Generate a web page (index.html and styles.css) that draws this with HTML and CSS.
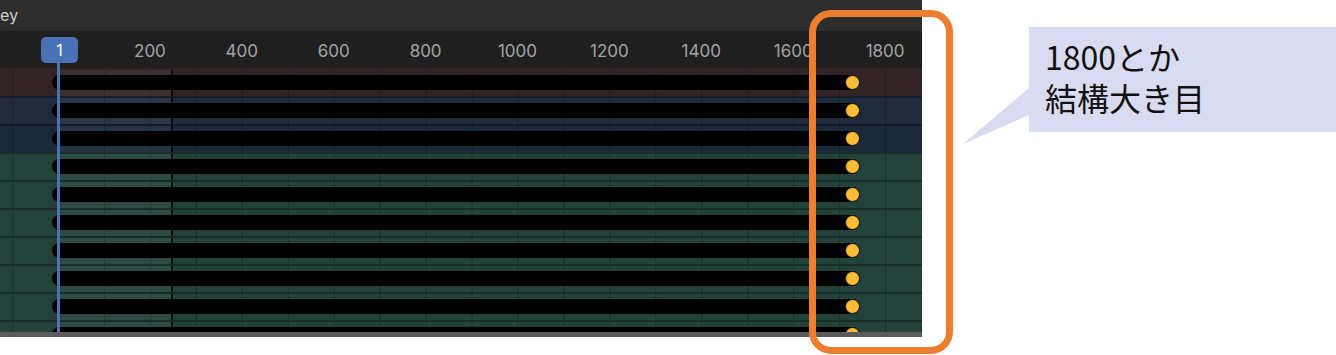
FILE: index.html
```html
<!DOCTYPE html>
<html lang="ja">

<head>
    <meta charset="UTF-8">
    <title>Timeline</title>
    <link rel="stylesheet" href="styles.css">
</head>

<body>

    <div class="page">

        <!-- Panneau de la timeline -->
        <div class="panel">
            <div class="panel-header"><span class="panel-title">Key</span></div>

            <div class="ruler">
                <span class="ruler-label">200</span>
                <span class="ruler-label">400</span>
                <span class="ruler-label">600</span>
                <span class="ruler-label">800</span>
                <span class="ruler-label">1000</span>
                <span class="ruler-label">1200</span>
                <span class="ruler-label">1400</span>
                <span class="ruler-label">1600</span>
                <span class="ruler-label">1800</span>
            </div>

            <div class="tracks">
                <div class="track track-red"><div class="key-bar"><span class="key-dot"></span></div></div>
                <div class="track track-blue"><div class="key-bar"><span class="key-dot"></span></div></div>
                <div class="track track-navy"><div class="key-bar"><span class="key-dot"></span></div></div>
                <div class="track track-green"><div class="key-bar"><span class="key-dot"></span></div></div>
                <div class="track track-green"><div class="key-bar"><span class="key-dot"></span></div></div>
                <div class="track track-green"><div class="key-bar"><span class="key-dot"></span></div></div>
                <div class="track track-green"><div class="key-bar"><span class="key-dot"></span></div></div>
                <div class="track track-green"><div class="key-bar"><span class="key-dot"></span></div></div>
                <div class="track track-green"><div class="key-bar"><span class="key-dot"></span></div></div>
                <div class="track track-green"><div class="key-bar"><span class="key-dot"></span></div></div>
            </div>

            <div class="scrollbar"></div>

            <!-- Tête de lecture -->
            <div class="playhead-line"></div>
            <div class="playhead">1</div>
        </div>

        <!-- Bulle de commentaire -->
        <div class="note">
            <span class="note-tail"></span>
            <p class="note-text">1800とか<br>結構大き目</p>
        </div>

    </div>

    <!-- Cadre orange -->
    <div class="highlight"></div>

</body>

</html>
```

FILE: styles.css
```css
/* Style global */
body, html {
    margin: 0;
    padding: 0;
    background-color: #fff;
    overflow: hidden;
}

.page {
    display: flex;
    align-items: flex-start;
    width: 1336px;
    height: 355px;
}

/* Panneau */
.panel {
    position: relative;
    width: 922px;
    flex: 0 0 auto;
    display: flex;
    flex-direction: column;
    font-family: Inter, "Liberation Sans", sans-serif;
}

.panel-header {
    height: 31px;
    background-color: #2d2d2d;
    display: flex;
    align-items: center;
    overflow: hidden;
}

.panel-title {
    margin-left: -10px;
    margin-top: -2px;
    font-size: 16px;
    color: #cdcdcd;
}

/* Règle */
.ruler {
    height: 37px;
    background-color: #1f1f1f;
    display: flex;
    align-items: center;
    padding-left: 104px;
    padding-top: 2px;
    box-sizing: border-box;
}

.ruler-label {
    flex: 0 0 91.9px;
    text-align: center;
    font-size: 17px;
    color: #a3a3a3;
}

/* Pistes */
.tracks {
    height: 264px;
    overflow: hidden;
}

.track {
    height: 28px;
    box-sizing: border-box;
    border-top: 2px solid rgba(0, 0, 0, 0.3);
    padding-top: 5px;
    background-image:
        linear-gradient(90deg, transparent 60px, rgba(255, 255, 255, 0.05) 60px 171px, rgba(0, 0, 0, 0.75) 171px 173px, transparent 173px),
        linear-gradient(90deg, rgba(0, 0, 0, 0.28) 0 1px, transparent 1px);
    background-size: 100% 100%, 45.95px 100%;
    background-position: 0 0, 12.2px 0;
    background-repeat: no-repeat, repeat-x;
}

.track:first-child {
    border-top-color: transparent;
}

.track-red { background-color: #322425; }
.track-blue { background-color: #1f2b3a; }
.track-navy { background-color: #1a2839; }
.track-green { background-color: #22423a; }

.key-bar {
    margin-left: 52px;
    width: 808px;
    height: 15px;
    background-color: #000;
    border-radius: 8px;
    display: flex;
    justify-content: flex-end;
}

.key-dot {
    width: 13px;
    height: 13px;
    border: 1px solid #111;
    border-radius: 50%;
    background-color: #fcbc33;
}

.scrollbar {
    height: 5px;
    background-color: #5b5b5b;
}

/* Tête de lecture */
.playhead {
    position: absolute;
    left: 41px;
    top: 37px;
    width: 37px;
    height: 26px;
    border-radius: 5px;
    background-color: #4a71b6;
    color: #fff;
    font-size: 16px;
    display: flex;
    align-items: center;
    justify-content: center;
}

.playhead-line {
    position: absolute;
    left: 57px;
    top: 60px;
    width: 3px;
    height: 272px;
    background-color: #4a71b6;
}

/* Bulle */
.note {
    position: relative;
    margin-left: 107px;
    margin-top: 27px;
    flex: 1;
    height: 105px;
    background-color: #d9dcf0;
}

.note-tail {
    position: absolute;
    left: -66px;
    top: 61px;
    width: 66px;
    height: 56px;
    background-color: #d9dcf0;
    clip-path: polygon(100% 0, 100% 48%, 0 100%);
}

.note-text {
    margin: 0;
    padding: 9px 0 0 16px;
    font-family: "Noto Sans CJK JP", sans-serif;
    font-size: 32px;
    line-height: 41px;
    color: #111;
}

/* Cadre orange */
.highlight {
    position: absolute;
    left: 809px;
    top: 10px;
    width: 144px;
    height: 344px;
    box-sizing: border-box;
    border: 7.5px solid #ed7d31;
    border-radius: 22px;
}
```
